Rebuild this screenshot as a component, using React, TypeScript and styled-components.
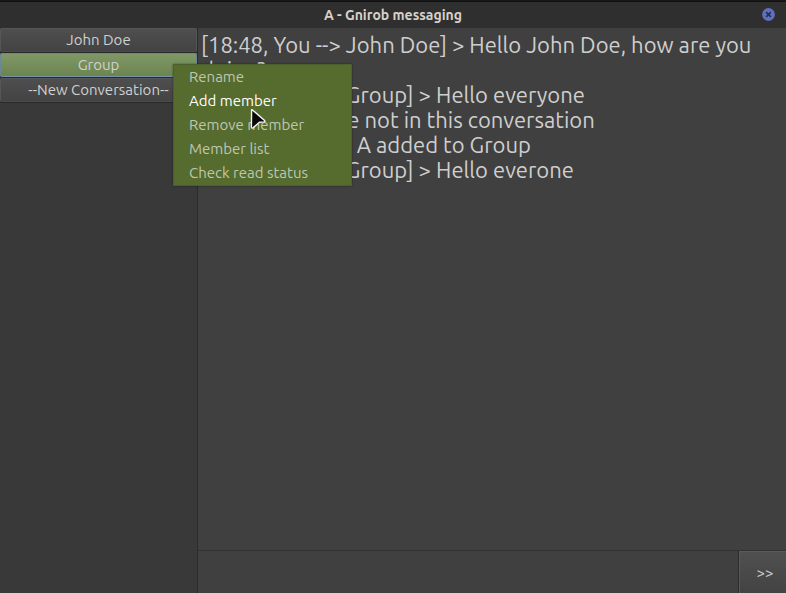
import React from "react";
import styled, { createGlobalStyle } from "styled-components";

const GlobalStyle = createGlobalStyle`
  *, *::before, *::after { box-sizing: border-box; }
  body { margin: 0; background: #393939; }
  body, button, input { font-family: Ubuntu, "Noto Sans", sans-serif; }
  button { margin: 0; cursor: default; }
`;

const Window = styled.div`
  position: relative;
  display: flex;
  flex-direction: column;
  height: 100vh;
  overflow: hidden;
  color: #cfcfcf;
  font-size: 15px;
`;

const TitleBar = styled.header`
  display: grid;
  grid-template-columns: 1fr auto 1fr;
  align-items: center;
  flex: none;
  height: 28px;
  padding: 0 11px;
  border-top: 1px solid #181818;
  background: #2f2f2f;
  box-shadow: inset 0 1px #101010;
`;

const Title = styled.h1`
  grid-column: 2;
  margin: 0;
  color: #d8d1cb;
  font-size: 14px;
  font-weight: 700;
  line-height: 20px;
`;

const CloseButton = styled.button`
  justify-self: end;
  display: flex;
  padding: 0;
  border: 0;
  background: none;
`;

const Body = styled.div`
  display: grid;
  grid-template-columns: 198px minmax(0, 1fr);
  flex: 1;
  min-height: 0;
`;

const Sidebar = styled.nav`
  display: flex;
  flex-direction: column;
  gap: 1px;
  border-right: 1px solid #2b2b2b;
  background: #393939;
`;

const Conversation = styled.button<{ $active?: boolean }>`
  height: 24px;
  padding: 0;
  border: 1px solid ${(p) => (p.$active ? "#6b8995" : "#565656")};
  border-bottom-color: ${(p) => (p.$active ? "#7894a8" : "#4b4b4b")};
  border-radius: 2px;
  background: ${(p) =>
    p.$active
      ? "linear-gradient(#809867, #6b8450)"
      : "linear-gradient(#4e4e4e, #434343)"};
  box-shadow: 0 1px #292929;
  color: #d0d0d0;
  font-size: 15px;
  line-height: 20px;
`;

const Chat = styled.main`
  display: flex;
  flex-direction: column;
  min-width: 0;
  background: #404040;
`;

const Messages = styled.section`
  flex: 1;
  padding: 4px 3px 0;
  overflow: hidden;
  font-size: 22px;
  line-height: 25px;
`;

const Message = styled.p`
  margin: 0;
`;

const Composer = styled.form`
  display: flex;
  flex: none;
  height: 43px;
  border-top: 1px solid #323232;
`;

const MessageInput = styled.input`
  flex: 1;
  min-width: 0;
  padding: 0 8px;
  border: 0;
  outline: 0;
  background: #404040;
  color: #d2d2d2;
  font-size: 15px;
`;

const SendButton = styled.button`
  width: 48px;
  padding: 0 0 0 5px;
  border: 0;
  border-left: 1px solid #2b2b2b;
  background: linear-gradient(#505050, #434343);
  box-shadow: inset 1px 1px #5a5a5a;
  color: #d0d0d0;
  font-size: 15px;
`;

const ContextMenu = styled.div`
  position: absolute;
  top: 64px;
  left: 173px;
  display: flex;
  flex-direction: column;
  width: 179px;
  border: 1px solid #4c602b;
  background: #566b2e;
  box-shadow: 0 0 2px #00000066;
`;

const MenuItem = styled.button<{ $highlighted?: boolean }>`
  height: 24px;
  padding: 0 15px;
  border: 0;
  background: none;
  color: ${(p) => (p.$highlighted ? "#ffffff" : "#bfc7b2")};
  font-size: 15px;
  line-height: 24px;
  text-align: left;
`;

const Pointer = styled.svg`
  position: absolute;
  top: 108px;
  left: 249px;
  pointer-events: none;
`;

const conversations = ["John Doe", "Group", "--New Conversation--"];

const messages = [
  "[18:48, You --> John Doe] > Hello John Doe, how are you doing?",
  "[18:48, You --> Group] > Hello everyone",
  "[18:48] : You are not in this conversation",
  "[18:49, Group] : A added to Group",
  "[18:49, You --> Group] > Hello everone",
];

const actions = ["Rename", "Add member", "Remove member", "Member list", "Check read status"];

export default function App() {
  return (
    <>
      <GlobalStyle />
      <Window>
        <TitleBar>
          <Title>A - Gnirob messaging</Title>
          <CloseButton aria-label="Close">
            <svg width="13" height="13" viewBox="0 0 13 13">
              <circle cx="6.5" cy="6.5" r="6.4" fill="#5f70bd" />
              <path d="M4.2 4.2 8.8 8.8M8.8 4.2 4.2 8.8" stroke="#292f50" strokeWidth="1.7" />
            </svg>
          </CloseButton>
        </TitleBar>
        <Body>
          <Sidebar aria-label="Conversations">
            {conversations.map((name) => (
              <Conversation key={name} $active={name === "Group"}>
                {name}
              </Conversation>
            ))}
          </Sidebar>
          <Chat>
            <Messages>
              {messages.map((text) => (
                <Message key={text}>{text}</Message>
              ))}
            </Messages>
            <Composer onSubmit={(e) => e.preventDefault()}>
              <MessageInput aria-label="Message" />
              <SendButton type="submit" aria-label="Send">
                &gt;&gt;
              </SendButton>
            </Composer>
          </Chat>
        </Body>
        <ContextMenu role="menu">
          {actions.map((label) => (
            <MenuItem key={label} role="menuitem" $highlighted={label === "Add member"}>
              {label}
            </MenuItem>
          ))}
        </ContextMenu>
        <Pointer width="19" height="23" viewBox="0 0 19 23" aria-hidden="true">
          <path
            d="M2.6 2.2Q2.4 1.2 3.5 1.9L15.6 12.6Q16.4 13.7 15 13.9L10.4 14.3 4.3 19.6Q2.6 20.8 2.4 19Z"
            fill="#080808"
            stroke="#f2f2f2"
            strokeWidth="1.4"
            strokeLinejoin="round"
          />
        </Pointer>
      </Window>
    </>
  );
}
